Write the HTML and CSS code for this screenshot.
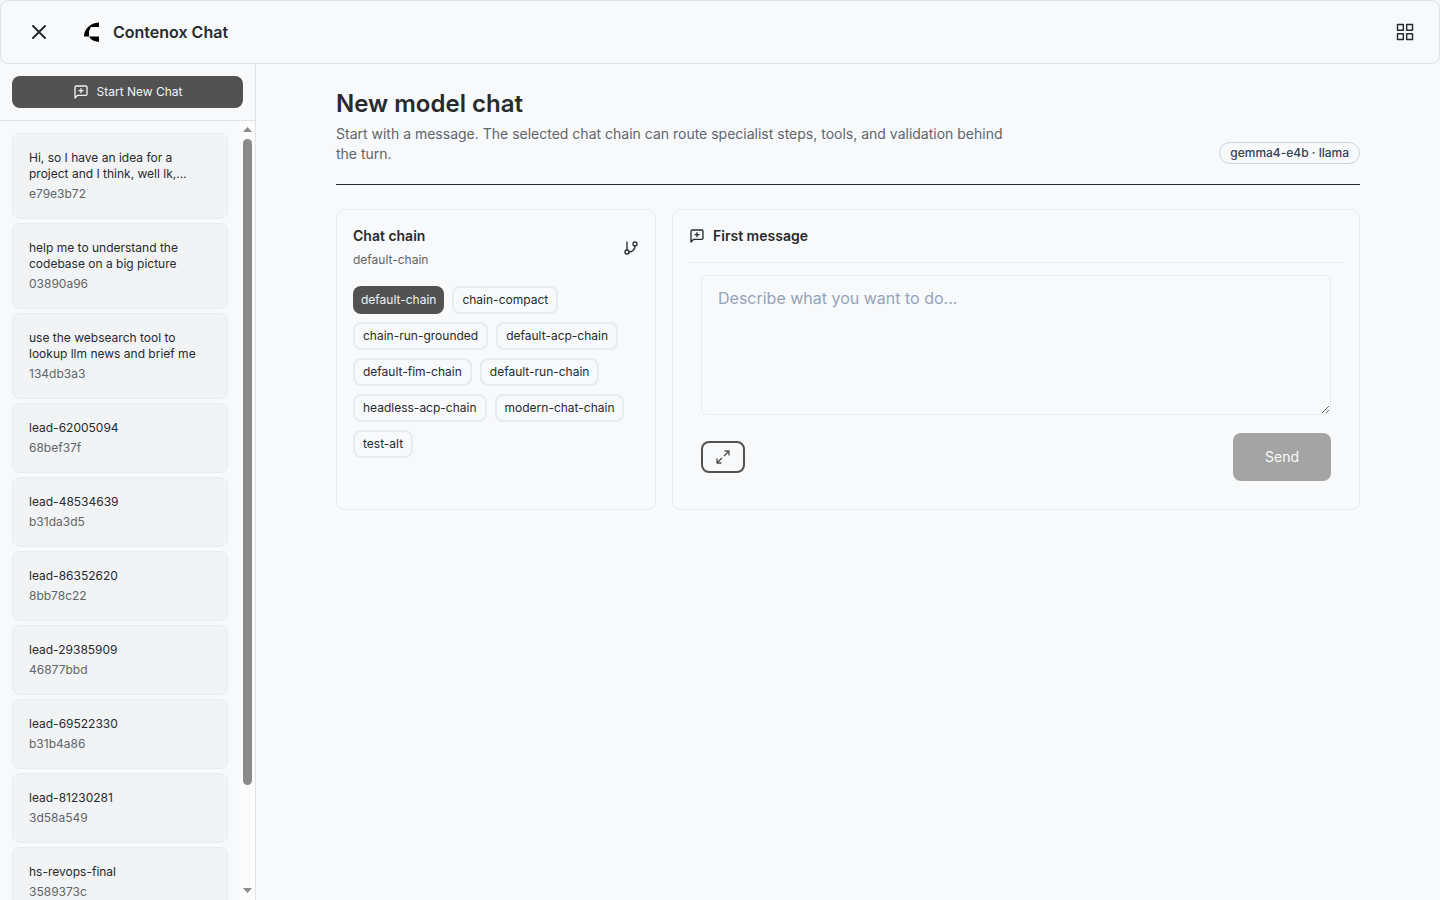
FILE: index.html
```html
<!DOCTYPE html>
<html lang="en">
    <head>
        <meta charset="utf-8">
        <meta name="viewport" content="width=device-width, initial-scale=1">
        <title>Contenox Chat</title>
        <link rel="stylesheet" href="styles.css">
    </head>
    <body>
        <!-- Shared icons -->
        <svg class="sprite" aria-hidden="true">
            <symbol id="icon-message" viewBox="0 0 24 24">
                <path d="M21 15a2 2 0 0 1-2 2H7l-4 4V5a2 2 0 0 1 2-2h14a2 2 0 0 1 2 2z"/>
                <path d="M12 7v6M9 10h6"/>
            </symbol>
        </svg>

        <header class="topbar">
            <button class="icon-button" type="button" aria-label="Close sidebar">
                <svg class="icon icon-close" viewBox="0 0 24 24"><path d="M18 6 6 18M6 6l12 12"/></svg>
            </button>
            <a class="brand" href="#">
                <svg class="logo" viewBox="0 0 20 20" aria-hidden="true">
                    <path d="M16 .5V5H8L6 9v5.500H1C1 7 7 1 16 .5z"/>
                    <path d="M6 14.500h10v5.300C11 19.500 8 18 6 14.500z"/>
                </svg>
                <span>Contenox Chat</span>
            </a>
            <button class="icon-button apps" type="button" aria-label="Apps">
                <svg class="icon icon-apps" viewBox="0 0 24 24">
                    <rect x="3" y="3" width="7" height="7"/>
                    <rect x="14" y="3" width="7" height="7"/>
                    <rect x="14" y="14" width="7" height="7"/>
                    <rect x="3" y="14" width="7" height="7"/>
                </svg>
            </button>
        </header>

        <div class="layout">
            <aside class="sidebar">
                <div class="sidebar-top">
                    <button class="new-chat" type="button">
                        <svg class="icon"><use href="#icon-message"/></svg>
                        Start New Chat
                    </button>
                </div>
                <div class="chats-wrap">
                    <nav class="chats" aria-label="Chats">
                        <a class="chat" href="#"><span class="chat-title">Hi, so I have an idea for a project and I think, well lk,…</span><span class="chat-id">e79e3b72</span></a>
                        <a class="chat" href="#"><span class="chat-title">help me to understand the codebase on a big picture</span><span class="chat-id">03890a96</span></a>
                        <a class="chat" href="#"><span class="chat-title">use the websearch tool to lookup llm news and brief me</span><span class="chat-id">134db3a3</span></a>
                        <a class="chat" href="#"><span class="chat-title">lead-62005094</span><span class="chat-id">68bef37f</span></a>
                        <a class="chat" href="#"><span class="chat-title">lead-48534639</span><span class="chat-id">b31da3d5</span></a>
                        <a class="chat" href="#"><span class="chat-title">lead-86352620</span><span class="chat-id">8bb78c22</span></a>
                        <a class="chat" href="#"><span class="chat-title">lead-29385909</span><span class="chat-id">46877bbd</span></a>
                        <a class="chat" href="#"><span class="chat-title">lead-69522330</span><span class="chat-id">b31b4a86</span></a>
                        <a class="chat" href="#"><span class="chat-title">lead-81230281</span><span class="chat-id">3d58a549</span></a>
                        <a class="chat" href="#"><span class="chat-title">hs-revops-final</span><span class="chat-id">3589373c</span></a>
                    </nav>
                    <div class="scrollbar" aria-hidden="true">
                        <svg class="arrow" viewBox="0 0 9 5"><path d="M0 5 4.500 0 9 5z"/></svg>
                        <div class="track"><div class="thumb"></div></div>
                        <svg class="arrow" viewBox="0 0 9 5"><path d="M0 0h9L4.500 5z"/></svg>
                    </div>
                </div>
            </aside>

            <main class="main">
                <div class="content">
                    <div class="page-head">
                        <div class="page-intro">
                            <h1>New model chat</h1>
                            <p>Start with a message. The selected chat chain can route specialist steps, tools, and validation behind the turn.</p>
                        </div>
                        <span class="badge">gemma4-e4b · llama</span>
                    </div>

                    <div class="panels">
                        <section class="panel">
                            <div class="chain-head">
                                <div>
                                    <h2>Chat chain</h2>
                                    <p>default-chain</p>
                                </div>
                                <svg class="icon" viewBox="0 0 24 24" aria-hidden="true">
                                    <path d="M6 3v12"/>
                                    <circle cx="18" cy="6" r="3"/>
                                    <circle cx="6" cy="18" r="3"/>
                                    <path d="M18 9a9 9 0 0 1-9 9"/>
                                </svg>
                            </div>
                            <div class="chips">
                                <button class="chip active" type="button">default-chain</button>
                                <button class="chip" type="button">chain-compact</button>
                                <button class="chip" type="button">chain-run-grounded</button>
                                <button class="chip" type="button">default-acp-chain</button>
                                <button class="chip" type="button">default-fim-chain</button>
                                <button class="chip" type="button">default-run-chain</button>
                                <button class="chip" type="button">headless-acp-chain</button>
                                <button class="chip" type="button">modern-chat-chain</button>
                                <button class="chip" type="button">test-alt</button>
                            </div>
                        </section>

                        <section class="panel">
                            <div class="message-head">
                                <svg class="icon"><use href="#icon-message"/></svg>
                                <h2><label for="message">First message</label></h2>
                            </div>
                            <form class="message-form">
                                <textarea id="message" placeholder="Describe what you want to do..."></textarea>
                                <div class="actions">
                                    <button class="expand" type="button" aria-label="Expand">
                                        <svg class="icon" viewBox="0 0 24 24"><path d="M15 3h6v6M21 3l-7 7M3 21l7-7M9 21H3v-6"/></svg>
                                    </button>
                                    <button class="send" type="submit" disabled>Send</button>
                                </div>
                            </form>
                        </section>
                    </div>
                </div>
            </main>
        </div>
    </body>
</html>
```

FILE: styles.css
```css
*, ::after, ::before {
    box-sizing: border-box;
}
body {
    display: flex;
    flex-direction: column;
    height: 100vh;
    margin: 0;
    background: #f8f9fb;
    color: #272a2e;
    font-family: Inter, "Liberation Sans", sans-serif;
    font-size: 14px;
    line-height: 20px;
}
h1, h2, p {
    margin: 0;
}
h2 {
    font-size: 14px;
    font-weight: 600;
}
a {
    color: inherit;
    text-decoration: none;
}
button, textarea {
    font-family: inherit;
}
button {
    display: flex;
    align-items: center;
    justify-content: center;
    border: 0;
    border-radius: 8px;
    background: none;
    color: inherit;
    line-height: 16px;
}
.sprite {
    position: absolute;
    width: 0;
    height: 0;
}
.icon {
    flex: none;
    width: 16px;
    height: 16px;
    fill: none;
    stroke: currentColor;
    stroke-width: 2;
    stroke-linecap: round;
    stroke-linejoin: round;
}

/* Top bar */
.topbar {
    display: flex;
    flex: none;
    align-items: center;
    height: 64px;
    padding: 0 14px;
    border: 1px solid #dee2e6;
    border-radius: 8px;
}
.icon-button {
    width: 48px;
    height: 40px;
    padding: 0;
}
.icon-close {
    width: 24px;
    height: 24px;
}
.icon-apps {
    width: 20px;
    height: 20px;
    stroke-width: 1.75;
}
.apps {
    width: 40px;
    margin-left: auto;
}
.brand {
    display: flex;
    align-items: center;
    gap: 10px;
    margin-left: 20px;
    font-size: 16px;
    font-weight: 600;
    line-height: 24px;
}
.logo {
    width: 20px;
    height: 20px;
    fill: #000;
}

/* Sidebar */
.layout {
    display: flex;
    flex: 1;
    min-height: 0;
}
.sidebar {
    display: flex;
    flex: none;
    flex-direction: column;
    width: 256px;
    border-right: 1px solid #dee2e6;
    font-size: 12px;
    line-height: 16px;
}
.sidebar-top {
    padding: 12px;
    border-bottom: 1px solid #dee2e6;
}
.new-chat {
    gap: 8px;
    width: 100%;
    height: 32px;
    background: #525252;
    color: #f1f3f5;
    font-size: 12px;
}
.chats-wrap {
    display: flex;
    flex: 1;
    min-height: 0;
}
.chats {
    display: flex;
    flex: 1;
    flex-direction: column;
    gap: 4px;
    padding: 12px;
    overflow-y: auto;
    scrollbar-width: none;
}
.chat {
    flex: none;
    padding: 16px;
    border: 1px solid #e9ecef;
    border-radius: 8px;
    background: #f1f3f5;
}
.chat-title, .chat-id {
    display: block;
}
.chat-id {
    margin-top: 4px;
    color: #5f656b;
}
.scrollbar {
    display: flex;
    flex: none;
    flex-direction: column;
    gap: 7px;
    width: 15px;
    padding: 6px 3px 7px;
    background: #fcfcfc;
}
.arrow {
    flex: none;
    width: 9px;
    height: 5px;
    fill: #8b8b8b;
}
.track {
    flex: 1;
}
.thumb {
    width: 9px;
    height: 87%;
    border-radius: 5px;
    background: #8b8b8b;
}

/* Main column */
.main {
    flex: 1;
    padding: 24px;
    overflow: auto;
}
.content {
    max-width: 1024px;
    margin: 0 auto;
}
.page-head {
    display: flex;
    align-items: flex-end;
    justify-content: space-between;
    gap: 16px;
    padding-bottom: 20px;
    border-bottom: 1px solid #272a2e;
}
.page-intro {
    max-width: 672px;
}
.page-intro h1 {
    font-size: 24px;
    font-weight: 600;
    line-height: 32px;
}
.page-intro p {
    margin-top: 4px;
    color: #5f656b;
}
.badge {
    padding: 2px 10px;
    border: 1px solid #cbd5e1;
    border-radius: 11px;
    color: #334155;
    font-size: 12px;
    font-weight: 500;
    line-height: 16px;
    white-space: nowrap;
}
.panels {
    display: grid;
    grid-template-columns: 320px 1fr;
    gap: 16px;
    margin-top: 24px;
}
.panel {
    padding: 16px;
    border: 1px solid #e9ecef;
    border-radius: 8px;
}
.chain-head {
    display: flex;
    align-items: center;
    justify-content: space-between;
}
.chain-head p {
    margin-top: 4px;
    color: #5f656b;
    font-size: 12px;
}
.chips {
    display: flex;
    flex-wrap: wrap;
    gap: 8px;
    margin-top: 16px;
}
.chip {
    height: 28px;
    padding: 0 8px;
    border: 2px solid #e9ecef;
    font-size: 12px;
}
.chip.active {
    border: 0;
    background: #525252;
    color: #f1f3f5;
}
.message-head {
    display: flex;
    align-items: center;
    gap: 8px;
    padding-bottom: 16px;
    border-bottom: 1px solid #e9ecef;
}
.message-form {
    padding: 12px;
}
textarea {
    display: block;
    width: 100%;
    height: 140px;
    padding: 10px 16px;
    border: 1px solid #e9ecef;
    border-radius: 6px;
    background: none;
    color: inherit;
    font-size: 16px;
    line-height: 24px;
    resize: vertical;
}
textarea::placeholder {
    color: #94a3b8;
}
.actions {
    display: flex;
    align-items: center;
    justify-content: space-between;
    margin-top: 18px;
}
.expand {
    width: 44px;
    height: 32px;
    border: 2px solid #525252;
    color: #525252;
}
.send {
    height: 48px;
    padding: 0 32px;
    background: #525252;
    color: #f8f9fb;
    font-size: 14px;
    line-height: 20px;
    opacity: 0.5;
}
```
